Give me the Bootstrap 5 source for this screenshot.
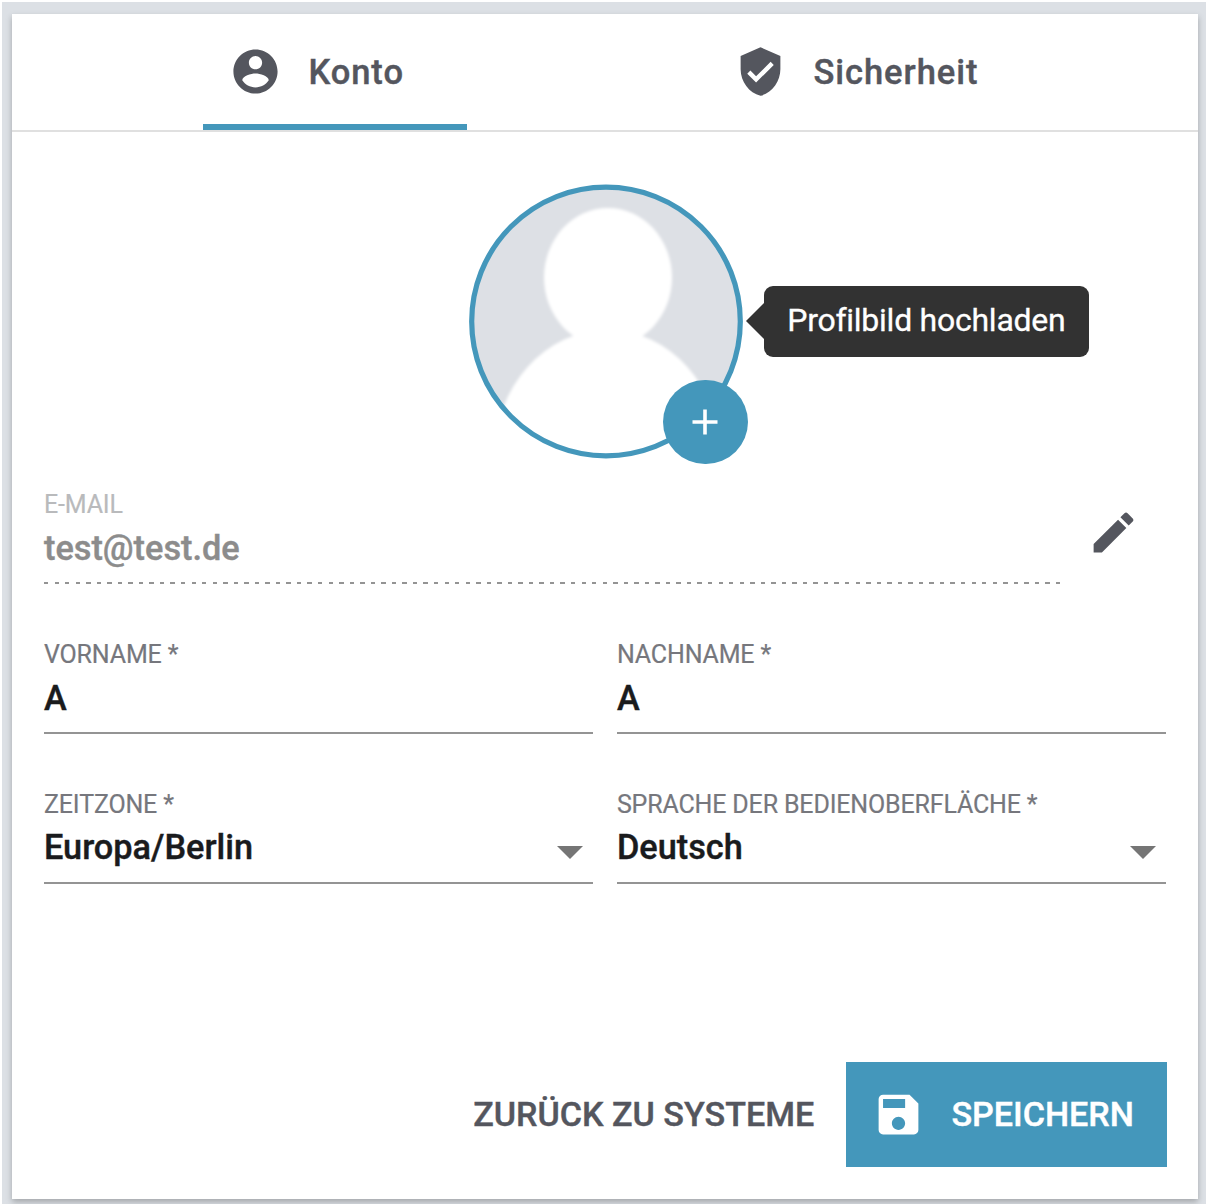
<!DOCTYPE html>
<html lang="de">
<head>
<meta charset="utf-8">
<meta name="viewport" content="width=device-width, initial-scale=1">
<title>Profil</title>
<link href="https://cdn.jsdelivr.net/npm/bootstrap@5.3.0/dist/css/bootstrap.min.css" rel="stylesheet">
<style>
:root { --accent: #4497bb; --ink: #54565e; --page: #dce0e5; }
html { background: #fff; }
body { font-family: Roboto, "Liberation Sans", sans-serif; color: var(--ink); background: #fff; height: 1204px; overflow: hidden; }
.page-shell { height: 1204px; padding: 11.5px 8px 0 10.4px; margin: 0 4px 0 2px; border-top: 2px solid #fff; background: var(--page); }
.profile-card { height: 1185px; border: 0; border-radius: 0; box-shadow: 0 3px 6px rgba(0,0,0,.26); }
.profile-card svg { flex: none; display: block; }
.tab-strip { height: 118px; border-bottom: 2.5px solid #e0e0e0; padding-left: 191px; gap: 242px; }
.tab-strip .nav-link { height: 116px; padding: 6px 25px 0; color: var(--ink); font-size: 34.5px; font-weight: 500; letter-spacing: .95px; gap: 26.5px; white-space: nowrap; border: 0; border-bottom: 6px solid transparent; line-height: 38px; border-radius: 0; -webkit-text-stroke: .4px; }
.tab-strip .nav-link.active { width: 263.5px; border-color: var(--accent); padding-left: 26px; gap: 26px; }
.tab-strip svg { stroke: none; }
.tab-strip .nav-link span { padding-top: 1px; }
.avatar-box { width: 274px; height: 275px; margin: 52.5px 0 0 456.3px; }
.avatar-add { right: -5px; bottom: -5px; width: 84.5px; height: 84.5px; background: var(--accent); }
.tip { left: 295px; top: 102px; width: 325.5px; height: 71px; border-radius: 9px; background: #323232; color: #fff; font-size: 32px; letter-spacing: -.25px; line-height: 68px; padding-left: 23.5px; white-space: nowrap; -webkit-text-stroke: .3px; }
.tip::before { content: ""; position: absolute; left: -18px; top: 17px; border: solid transparent; border-width: 18px 18px 18px 0; border-right-color: #323232; }
.form-area { padding: 25px 31.6px 0; }
.field { height: 100px; margin-bottom: 50px; border-bottom: 2.5px solid #949494; white-space: nowrap; padding-top: 1.5px; }
.field-label { font-size: 25px; letter-spacing: -.16px; line-height: 38px; color: #76777d; -webkit-text-stroke: .2px; }
.field-value { font-size: 34.3px; line-height: 48.5px; font-weight: 500; color: #1a1b1d; -webkit-text-stroke: .4px; }
.field-select .field-value { line-height: 46.5px; }
.field-locked { border-bottom: 0; width: 1016px; background: repeating-linear-gradient(90deg, #949494 0 4.4px, transparent 4.4px 10.54px) left bottom / 100% 2.5px no-repeat; }
.field-locked .field-label { color: #b9babc; }
.field-locked .field-value { color: #8c8c8c; }
.edit-icon { margin: 21.5px 0 0 27px; }
.fields-row { --bs-gutter-x: 23.5px; }
.caret { margin: 10.5px 10.5px 0 0; }
.actions { padding: 127.8px 31.4px 0; gap: 32px; }
.actions .btn { height: 105px; border: 0; border-radius: 0; font-size: 34.1px; font-weight: 500; line-height: 1; white-space: nowrap; -webkit-text-stroke: .4px; }
.btn-back { padding: 0; color: var(--ink); }
.actions .btn-save, .actions .btn-save:hover { width: 320.4px; padding: 0 0 0 25.7px; gap: 26.5px; color: #fff; background: var(--accent); }
</style>
</head>
<body>
<div class="page-shell">
  <main class="profile-card card">
    <nav class="tab-strip nav flex-nowrap">
      <a class="nav-link active d-flex align-items-center" href="#">
        <svg width="53" height="53" viewBox="0 0 24 24" fill="currentColor"><path d="M12 2C6.48 2 2 6.48 2 12s4.48 10 10 10 10-4.48 10-10S17.52 2 12 2zm0 3c1.66 0 3 1.34 3 3s-1.34 3-3 3-3-1.34-3-3 1.34-3 3-3zm0 14.2c-2.5 0-4.71-1.28-6-3.22.03-1.99 4-3.08 6-3.08 1.99 0 5.97 1.09 6 3.08-1.29 1.94-3.5 3.22-6 3.22z"/></svg>
        <span>Konto</span>
      </a>
      <a class="nav-link d-flex align-items-center" href="#">
        <svg width="53" height="53" viewBox="0 0 24 24" fill="currentColor"><path d="M12 1L3 5v6c0 5.55 3.84 10.74 9 12 5.16-1.26 9-6.45 9-12V5l-9-4zm-2 16l-4-4 1.41-1.41L10 14.17l6.59-6.59L18 9l-8 8z"/></svg>
        <span>Sicherheit</span>
      </a>
    </nav>

    <div class="avatar-box position-relative">
      <svg width="274" height="275" viewBox="0 0 274 275">
        <defs>
          <clipPath id="round"><circle cx="137" cy="137.5" r="135"/></clipPath>
          <filter id="soft"><feGaussianBlur stdDeviation="1.6"/></filter>
        </defs>
        <g clip-path="url(#round)">
          <rect width="274" height="275" fill="#dde0e5"/>
          <g fill="#fff" filter="url(#soft)">
            <ellipse cx="139" cy="93.5" rx="64" ry="69.5"/>
            <ellipse cx="138.5" cy="272" rx="113" ry="126"/>
          </g>
        </g>
        <circle cx="137" cy="137.5" r="134.3" fill="none" stroke="#4497bb" stroke-width="5.2"/>
      </svg>
      <div class="avatar-add position-absolute rounded-circle d-flex align-items-center justify-content-center">
        <svg width="26" height="26" viewBox="0 0 26 26" stroke="#fff" stroke-width="3.6"><path d="M13 .5v25M.5 13h25"/></svg>
      </div>
      <div class="tip position-absolute" role="tooltip">Profilbild hochladen</div>
    </div>

    <div class="form-area">
      <div class="d-flex align-items-start">
        <div class="field field-locked">
          <div class="field-label">E-MAIL</div>
          <div class="field-value">test@test.de</div>
        </div>
        <svg class="edit-icon" width="53" height="53" viewBox="0 0 24 24" fill="currentColor"><path d="M3 17.25V21h3.75L17.81 9.94l-3.75-3.75L3 17.25zM20.71 7.04c.39-.39.39-1.02 0-1.41l-2.34-2.34c-.39-.39-1.02-.39-1.41 0l-1.83 1.83 3.75 3.75 1.83-1.83z"/></svg>
      </div>
      <div class="row fields-row">
        <div class="col-6"><div class="field">
          <div class="field-label">VORNAME *</div>
          <div class="field-value">A</div>
        </div></div>
        <div class="col-6"><div class="field">
          <div class="field-label">NACHNAME *</div>
          <div class="field-value">A</div>
        </div></div>
        <div class="col-6"><div class="field field-select">
          <div class="field-label">ZEITZONE *</div>
          <div class="field-value d-flex align-items-center justify-content-between"><span>Europa/Berlin</span><svg class="caret" width="26" height="13" viewBox="0 0 26 13" fill="#757575" stroke="none"><path d="M0 0h26L13 13z"/></svg></div>
        </div></div>
        <div class="col-6"><div class="field field-select">
          <div class="field-label">SPRACHE DER BEDIENOBERFLÄCHE *</div>
          <div class="field-value d-flex align-items-center justify-content-between"><span>Deutsch</span><svg class="caret" width="26" height="13" viewBox="0 0 26 13" fill="#757575" stroke="none"><path d="M0 0h26L13 13z"/></svg></div>
        </div></div>
      </div>
    </div>

    <div class="actions d-flex justify-content-end">
      <button class="btn btn-back" type="button">ZURÜCK ZU SYSTEME</button>
      <button class="btn btn-save d-flex align-items-center" type="button">
        <svg width="53" height="53" viewBox="0 0 24 24" fill="currentColor"><path d="M17 3H5c-1.11 0-2 .9-2 2v14c0 1.1.89 2 2 2h14c1.1 0 2-.9 2-2V7l-4-4zm-5 16c-1.66 0-3-1.34-3-3s1.34-3 3-3 3 1.34 3 3-1.34 3-3 3zm3-10H5V5h10v4z"/></svg>
        <span>SPEICHERN</span>
      </button>
    </div>
  </main>
</div>
<script src="https://cdn.jsdelivr.net/npm/bootstrap@5.3.0/dist/js/bootstrap.bundle.min.js"></script>
</body>
</html>
